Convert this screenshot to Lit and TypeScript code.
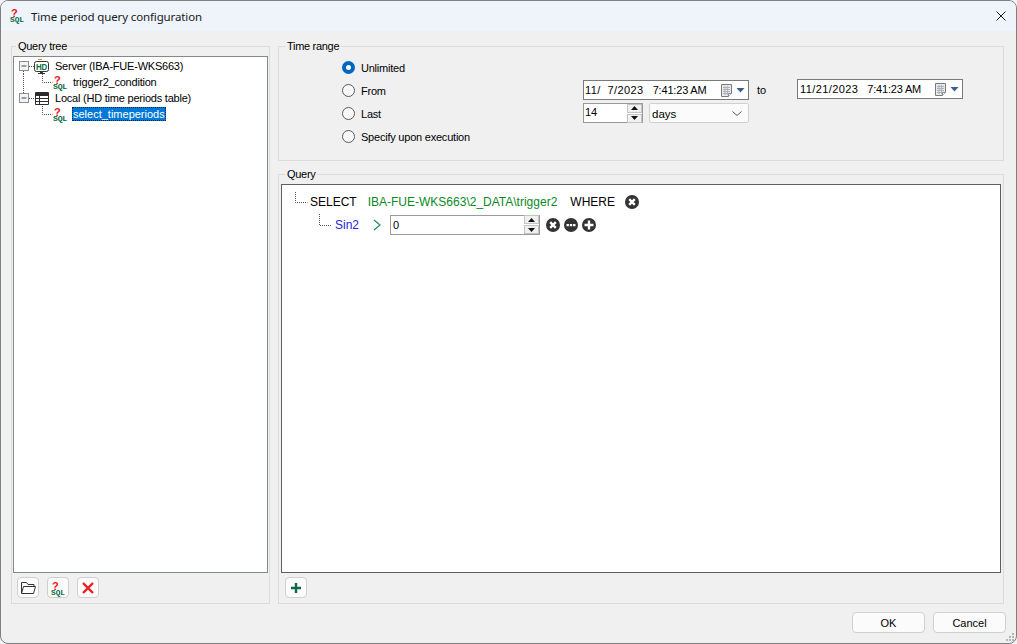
import { LitElement, html, svg, css } from 'lit';
import { customElement } from 'lit/decorators.js';

// red question mark over green SQL, drawn with real text
const sqlIcon = (x: number, y: number) => svg`
  <text x=${x + 1} y=${y + 9} class="q">?</text>
  <text x=${x} y=${y + 14} class="sql" textLength="14" lengthAdjust="spacingAndGlyphs">SQL</text>
`;

const expander = svg`
  <rect x="5.5" y="3.5" width="9" height="9" fill="#f4f4f4" stroke="#8e8e8e"/>
  <path d="M7.5 8h5" stroke="#2d4a6e" fill="none"/>
`;

const dots = (d: string) => svg`<path d=${d} class="dots"/>`;

const circleBtn = (kind: 'x' | 'more' | 'plus') => html`
  <svg class="round" width="14" height="14" viewBox="0 0 14 14">
    <circle cx="7" cy="7" r="7" fill="#333"/>
    ${kind === 'x'
      ? svg`<path d="M4.2 4.2l5.6 5.6M9.8 4.2l-5.6 5.6" stroke="#fff" stroke-width="2.4"/>`
      : kind === 'plus'
      ? svg`<path d="M7 2.5v9M2.5 7h9" stroke="#fff" stroke-width="2.4"/>`
      : svg`<path d="M2.5 6h2.4v2.2H2.5zM5.8 6h2.4v2.2H5.8zM9.1 6h2.4v2.2H9.1z" fill="#fff"/>`}
  </svg>
`;

const spinner = html`
  <span class="spin">
    <span class="spin-btn"><svg width="7" height="4" viewBox="0 0 7 4"><path d="M3.5 0L7 4H0z" fill="#111"/></svg></span>
    <span class="spin-btn"><svg width="7" height="4" viewBox="0 0 7 4"><path d="M0 0h7L3.5 4z" fill="#111"/></svg></span>
  </span>
`;

@customElement('app-root')
export class AppRoot extends LitElement {
  static styles = css`
    :host {
      display: block;
      width: 1017px;
      height: 644px;
      background: #f3f4f6;
      font-family: 'Liberation Sans', Arial, sans-serif;
      font-size: 11px;
      color: #000;
    }
    svg {
      display: block;
      flex: none;
      overflow: visible;
    }
    .q {
      font: 11px 'Liberation Sans', sans-serif;
      font-weight: 700;
      fill: #e8141c;
    }
    .sql {
      font: bold 7px 'Liberation Mono', monospace;
      fill: #0b6b45;
    }
    .dots {
      fill: none;
      stroke: #555;
      stroke-dasharray: 1 1;
    }
    .window {
      box-sizing: border-box;
      width: 1017px;
      height: 644px;
      display: flex;
      flex-direction: column;
      background: #f0f0f0;
      border: 1px solid #7f7f7f;
      border-radius: 8px;
      overflow: hidden;
      position: relative;
    }
    .titlebar {
      height: 30px;
      flex: none;
      display: flex;
      align-items: center;
      background: #eff4fb;
      padding: 0 10px 0 7px;
    }
    .title {
      font-family: 'Noto Sans', sans-serif;
      font-size: 11.5px;
      letter-spacing: -0.13px;
      margin-left: 7px;
      flex: 1;
      color: #1a1a1a;
    }
    .main {
      flex: none;
      height: 573px;
      box-sizing: border-box;
      display: grid;
      grid-template-columns: 259px 726px;
      column-gap: 8px;
      padding: 9px 0 0 10px;
    }
    fieldset {
      margin: 0;
      padding: 0;
      min-width: 0;
      box-sizing: border-box;
      border: 1px solid #dcdcdc;
    }
    legend {
      padding: 0 2px;
      margin-left: 4px;
      line-height: 13px;
      height: 13px;
      letter-spacing: -0.3px;
    }
    .left {
      height: 564px;
      padding: 3px 1px 0 1px;
      display: flex;
      flex-direction: column;
    }
    .left legend {
      margin-left: 3px;
    }
    .tree {
      box-sizing: border-box;
      height: 517px;
      flex: none;
      background: #fff;
      border: 1px solid #828790;
      padding-top: 1px;
    }
    .node {
      display: flex;
      align-items: center;
      height: 16px;
      letter-spacing: -0.22px;
    }
    .node span {
      padding: 0 1px;
      white-space: nowrap;
    }
    .node .sel {
      background: #0078d7;
      color: #fff;
      outline: 1px dotted #0c2a4a;
      outline-offset: -1px;
      height: 14px;
      line-height: 14px;
      letter-spacing: 0;
    }
    .tools {
      display: flex;
      gap: 8px;
      padding: 4px 0 0 4px;
    }
    .tool {
      box-sizing: border-box;
      width: 22px;
      height: 21px;
      background: #fbfbfb;
      border: 1px solid #cfcfcf;
      border-radius: 4px;
      display: flex;
      align-items: center;
      justify-content: center;
    }
    .right {
      display: flex;
      flex-direction: column;
      gap: 7px;
      height: 564px;
    }
    .range {
      height: 121px;
      flex: none;
    }
    .range legend {
      margin-left: 6px;
    }
    .range-grid {
      padding: 3px 0 0 63px;
      display: grid;
      grid-template-columns: 241px 166px 48px 166px;
      grid-auto-rows: 23px;
      align-items: start;
    }
    .radio {
      display: flex;
      align-items: center;
      gap: 6px;
      height: 23px;
      grid-column: 1;
      letter-spacing: -0.22px;
    }
    .dot {
      box-sizing: border-box;
      width: 13px;
      height: 13px;
      border-radius: 50%;
      border: 1px solid #5a5a5a;
      background: #f8f8f8;
    }
    .dot.on {
      border: 4px solid #0067c0;
      background: #fff;
    }
    .field {
      box-sizing: border-box;
      height: 20px;
      background: #fff;
      border: 1px solid #7a7a7a;
      display: flex;
      align-items: center;
    }
    .date {
      padding: 0 3px 0 1px;
      margin-top: 1px;
    }
    .date.end {
      margin-top: 0;
      padding-left: 2px;
    }
    .day {
      white-space: pre;
      letter-spacing: 0.4px;
    }
    .time {
      white-space: pre;
      letter-spacing: -0.18px;
      margin-left: 9px;
      flex: 1;
    }
    .to {
      padding-left: 8px;
      line-height: 23px;
    }
    .cal {
      display: flex;
      align-items: center;
      gap: 3px;
    }
    .lastrow {
      display: flex;
      gap: 6px;
      margin-top: 1px;
    }
    .num {
      width: 60px;
      padding-left: 1px;
      justify-content: space-between;
      border-color: #9a9a9a;
    }
    .num-value {
      margin-top: -3px;
    }
    .spin {
      display: flex;
      flex-direction: column;
      gap: 1px;
    }
    .spin-btn {
      box-sizing: border-box;
      width: 15px;
      height: 9px;
      background: #f0f0f0;
      border: 1px solid #c4c4c4;
      display: flex;
      align-items: center;
      justify-content: center;
    }
    .select {
      flex: 1;
      border: 1px solid #d0d0d0;
      border-radius: 2px;
      padding: 1px 6px 0 2px;
      justify-content: space-between;
      background: #fbfbfb;
      font-size: 11.5px;
    }
    .query {
      flex: 1;
      min-height: 0;
      padding: 3px 2px 0 2px;
      display: flex;
      flex-direction: column;
    }
    .editor {
      box-sizing: border-box;
      height: 389px;
      flex: none;
      background: #fff;
      border: 1px solid #5f5f5f;
      padding-top: 7px;
      font-size: 12px;
    }
    .line {
      display: flex;
      align-items: center;
    }
    .line.one {
      height: 20px;
    }
    .line.two {
      height: 21px;
      margin-top: 2px;
    }
    .kw {
      white-space: nowrap;
    }
    .table {
      color: #0a8a1e;
      margin: 0 13px 0 11px;
      white-space: nowrap;
    }
    .where-gap {
      width: 10px;
    }
    .col {
      color: #2a22d8;
      margin-left: 2px;
      width: 38px;
    }
    .gt {
      margin-right: 9px;
    }
    .cond {
      width: 150px;
      padding-left: 2px;
      justify-content: space-between;
      border-color: #9a9a9a;
      margin-right: 6px;
      font-size: 11px;
    }
    .rounds {
      display: flex;
      gap: 4px;
    }
    .query .tools {
      padding: 4px 0 0 4px;
    }
    .footer {
      flex: none;
      display: flex;
      justify-content: flex-end;
      gap: 8px;
      padding: 8px 10px 0 0;
    }
    .btn {
      box-sizing: border-box;
      width: 73px;
      height: 21px;
      background: #fbfbfb;
      border: 1px solid #d0d0d0;
      border-radius: 4px;
      display: flex;
      align-items: center;
      justify-content: center;
    }
    .grip {
      position: absolute;
      right: 1px;
      bottom: 1px;
    }
  `;

  private calendar() {
    return html`<span class="cal">
      <svg width="12" height="13" viewBox="0 0 12 13">
        <path d="M.5.5h10v9l-3 3h-7z" fill="#e6e9ee" stroke="#7a7a7a"/>
        <path d="M2 3.5h7M2 5.5h7M2 7.5h7M2 9.5h5M4 2v9M6.5 2v9" stroke="#b0b4ba" fill="none"/>
        <path d="M7.5 12.5v-3h3" fill="#fff" stroke="#8a8a8a"/>
      </svg>
      <svg width="9" height="5" viewBox="0 0 9 5"><path d="M.5 0h8L4.5 4.5z" fill="#3d5f8a"/></svg>
    </span>`;
  }

  render() {
    return html`
      <div class="window">
        <header class="titlebar">
          <svg width="16" height="16" viewBox="0 0 16 16">${sqlIcon(2, 0)}</svg>
          <div class="title">Time period query configuration</div>
          <svg width="10" height="10" viewBox="0 0 10 10">
            <path d="M.5.5l9 9M9.5.5l-9 9" stroke="#1a1a1a" fill="none"/>
          </svg>
        </header>

        <div class="main">
          <fieldset class="left">
            <legend>Query tree</legend>
            <div class="tree">
              <div class="node">
                <svg width="40" height="16" viewBox="0 0 40 16">
                  ${expander}
                  ${dots('M9.5 13v3M15 8.5h6')}
                  <path d="M22.5 3.5h10a2 2 0 0 1 2 2v6a2 2 0 0 1-2 2h-10a2 2 0 0 1-2-2v-6a2 2 0 0 1 2-2z" fill="#fff" stroke="#333"/>
                  <path d="M24 1.5h4" stroke="#e8881c"/>
                  <path d="M26 14.5h3M24 15.5h7" stroke="#333"/>
                  <text x="22" y="11.5" font-family="Liberation Sans" font-weight="700" font-size="8.5" fill="#0b6b45" textLength="11" lengthAdjust="spacingAndGlyphs">HD</text>
                </svg>
                <span>Server (IBA-FUE-WKS663)</span>
              </div>
              <div class="node">
                <svg width="58" height="16" viewBox="0 0 58 16">
                  ${dots('M9.5 0v16M28.5 0v8.5h10')}
                  ${sqlIcon(39, 1)}
                </svg>
                <span>trigger2_condition</span>
              </div>
              <div class="node">
                <svg width="40" height="16" viewBox="0 0 40 16">
                  ${expander}
                  ${dots('M9.5 0v3M15 8.5h6')}
                  <path d="M21.5 2.5h13v12h-13z" fill="#fff" stroke="#2b2b2b"/>
                  <path d="M21 3h14v3H21z" fill="#2b2b2b"/>
                  <path d="M22 8.5h12M22 11.5h12M25.5 6v8" stroke="#2b2b2b" fill="none"/>
                </svg>
                <span>Local (HD time periods table)</span>
              </div>
              <div class="node">
                <svg width="58" height="16" viewBox="0 0 58 16">
                  ${dots('M28.5 0v8.5h10')}
                  ${sqlIcon(39, 1)}
                </svg>
                <span class="sel">select_timeperiods</span>
              </div>
            </div>
            <div class="tools">
              <div class="tool">
                <svg width="15" height="13" viewBox="0 0 15 13">
                  <path d="M.5 12V1.5h5l1.5 2h6v2" fill="none" stroke="#333"/>
                  <path d="M.5 12.5l2-7h12l-2 7z" fill="#fff" stroke="#333"/>
                </svg>
              </div>
              <div class="tool"><svg width="16" height="16" viewBox="0 0 16 16">${sqlIcon(1, 1)}</svg></div>
              <div class="tool">
                <svg width="12" height="12" viewBox="0 0 12 12">
                  <path d="M1 1l10 10M11 1L1 11" stroke="#f01c1c" stroke-width="2.4" fill="none"/>
                </svg>
              </div>
            </div>
          </fieldset>

          <div class="right">
            <fieldset class="range">
              <legend>Time range</legend>
              <div class="range-grid">
                <label class="radio"><span class="dot on"></span>Unlimited</label>
                <label class="radio"><span class="dot"></span>From</label>
                <div class="field date"><span class="day">11/  7/2023</span><span class="time">7:41:23 AM</span>${this.calendar()}</div>
                <div class="to">to</div>
                <div class="field date end"><span class="day">11/21/2023</span><span class="time">7:41:23 AM</span>${this.calendar()}</div>
                <label class="radio"><span class="dot"></span>Last</label>
                <div class="lastrow">
                  <div class="field num"><span class="num-value">14</span>${spinner}</div>
                  <div class="field select">
                    days
                    <svg width="10" height="5" viewBox="0 0 10 5"><path d="M.5.5L5 4.5 9.5.5" fill="none" stroke="#555"/></svg>
                  </div>
                </div>
                <label class="radio"><span class="dot"></span>Specify upon execution</label>
              </div>
            </fieldset>

            <fieldset class="query">
              <legend>Query</legend>
              <div class="editor">
                <div class="line one">
                  <svg width="28" height="20" viewBox="0 0 28 20">
                    ${dots('M13.5 0v10.5h12')}
                  </svg>
                  <span class="kw">SELECT</span>
                  <span class="table">IBA-FUE-WKS663\\2_DATA\\trigger2</span>
                  <span class="kw">WHERE</span>
                  <span class="where-gap"></span>
                  ${circleBtn('x')}
                </div>
                <div class="line two">
                  <svg width="51" height="21" viewBox="0 0 51 21">
                    ${dots('M37.5 0v11.5h12')}
                  </svg>
                  <span class="col">Sin2</span>
                  <svg class="gt" width="8" height="12" viewBox="0 0 8 12">
                    <path d="M1 1l6 5-6 5" fill="none" stroke="#1c8a6c" stroke-width="1.2"/>
                  </svg>
                  <div class="field cond">0${spinner}</div>
                  <div class="rounds">
                    ${circleBtn('x')}${circleBtn('more')}${circleBtn('plus')}
                  </div>
                </div>
              </div>
              <div class="tools">
                <div class="tool">
                  <svg width="12" height="12" viewBox="0 0 12 12">
                    <path d="M6 1v10M1 6h10" stroke="#0b6b45" stroke-width="2.4" fill="none"/>
                  </svg>
                </div>
              </div>
            </fieldset>
          </div>
        </div>

        <footer class="footer">
          <div class="btn">OK</div>
          <div class="btn">Cancel</div>
        </footer>
        <svg class="grip" width="10" height="10" viewBox="0 0 10 10">
          <path d="M7 1h2v2H7zM4 4h2v2H4zM7 4h2v2H7zM1 7h2v2H1zM4 7h2v2H4zM7 7h2v2H7z" fill="#b5b5b5"/>
        </svg>
      </div>
    `;
  }
}
